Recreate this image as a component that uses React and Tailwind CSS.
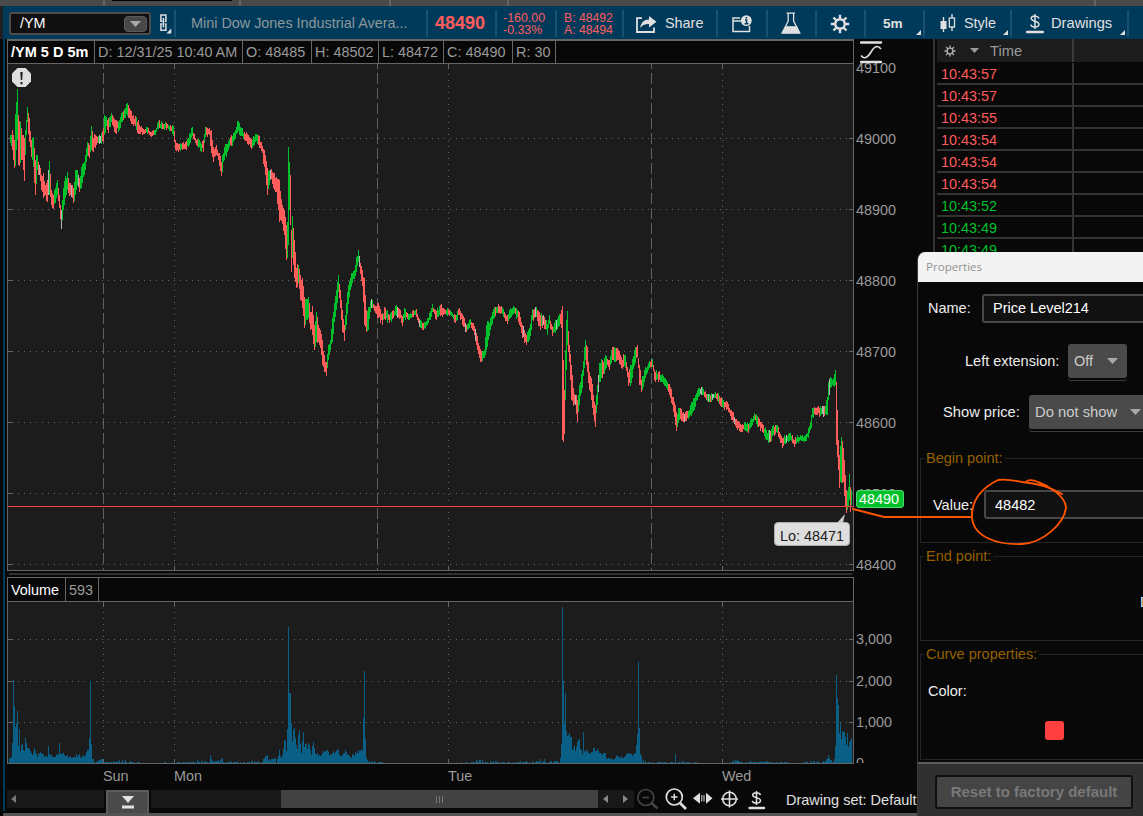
import clsx from "clsx";

const UP = "#00c02c";
const DOWN = "#ff5c5c";
const FLAT = "#b4b4b4";

// x, high, low of the 5 minute bars, interpolated in between
const priceKnots = [
  [10, 135, 143], [12, 130, 150], [14, 140, 168], [15, 114, 166], [16, 102, 150],
  [17, 89, 140], [18, 115, 165], [20, 122, 163], [22, 135, 160], [24, 138, 181],
  [25, 130, 155], [27, 107, 122], [29, 118, 142], [31, 140, 157], [33, 137, 167],
  [35, 160, 195], [37, 155, 170], [39, 165, 175], [41, 175, 190], [43, 173, 198],
  [45, 185, 195], [47, 180, 202], [49, 161, 195], [51, 190, 205], [53, 195, 209],
  [55, 188, 203], [57, 180, 195], [59, 195, 208], [61, 210, 229], [63, 188, 210],
  [65, 176, 198], [67, 172, 190], [69, 183, 196], [71, 185, 197], [73, 188, 203],
  [75, 170, 195], [77, 170, 185], [79, 178, 192], [81, 167, 188], [83, 163, 177],
  [85, 155, 170], [87, 142, 156], [89, 145, 158], [91, 126, 150], [93, 138, 152],
  [95, 135, 148], [97, 137, 143], [99, 135, 144], [101, 133, 144], [103, 128, 142],
  [104, 115, 135], [106, 117, 126], [108, 118, 133], [111, 113, 122], [115, 120, 133],
  [119, 120, 130], [122, 112, 122], [125, 108, 118], [127, 103, 116], [130, 110, 121],
  [133, 115, 126], [136, 117, 130], [139, 125, 134], [143, 129, 134], [147, 127, 134],
  [151, 132, 137], [155, 130, 135], [158, 121, 129], [162, 123, 129], [166, 123, 130],
  [170, 125, 131], [173, 126, 136], [175, 140, 150], [178, 144, 152], [182, 143, 150],
  [186, 141, 150], [189, 133, 145], [192, 127, 136], [195, 138, 143], [200, 142, 151],
  [203, 140, 152], [205, 127, 137], [209, 128, 135], [211, 130, 153], [213, 147, 162],
  [216, 145, 155], [219, 153, 166], [221, 162, 176], [224, 147, 160], [228, 141, 150],
  [231, 135, 146], [234, 132, 140], [237, 121, 133], [240, 127, 136], [244, 132, 140],
  [248, 135, 145], [251, 139, 149], [255, 134, 142], [258, 135, 145], [261, 142, 151],
  [264, 150, 167], [267, 168, 195], [270, 170, 180], [273, 173, 188], [276, 177, 192],
  [279, 180, 222], [282, 205, 224], [284, 210, 235], [286, 225, 260], [287, 222, 258],
  [288, 147, 245], [289, 162, 210], [290, 175, 225], [291, 230, 272], [292, 216, 258],
  [294, 240, 278], [296, 268, 288], [298, 265, 283], [300, 275, 300], [302, 278, 308],
  [304, 297, 328], [306, 299, 320], [308, 297, 318], [310, 312, 330], [312, 306, 335],
  [314, 325, 350], [316, 312, 342], [318, 325, 342], [320, 330, 348], [322, 340, 365],
  [324, 355, 372], [326, 362, 376], [328, 345, 360], [330, 340, 350], [332, 318, 342],
  [334, 303, 322], [336, 290, 310], [338, 275, 292], [340, 290, 308], [342, 310, 332],
  [344, 325, 341], [346, 303, 325], [348, 285, 304], [350, 278, 290], [352, 273, 283],
  [354, 270, 279], [356, 257, 272], [358, 250, 262], [360, 263, 274], [362, 270, 286],
  [364, 278, 325], [366, 310, 332], [368, 307, 330], [370, 301, 312], [372, 300, 308],
  [375, 306, 313], [378, 303, 318], [382, 313, 325], [385, 308, 320], [389, 315, 323],
  [393, 310, 318], [396, 305, 316], [400, 310, 318], [402, 316, 326], [404, 308, 318],
  [408, 314, 320], [412, 311, 317], [416, 309, 317], [419, 319, 327], [423, 323, 330],
  [427, 318, 325], [430, 311, 320], [432, 304, 312], [436, 311, 320], [440, 305, 316],
  [443, 308, 315], [450, 310, 315], [455, 315, 323], [459, 308, 315], [463, 316, 327],
  [466, 325, 332], [470, 319, 325], [474, 326, 335], [477, 336, 350], [480, 349, 362],
  [484, 350, 358], [486, 325, 350], [490, 318, 330], [494, 307, 318], [498, 304, 313],
  [503, 309, 317], [507, 315, 324], [510, 308, 318], [514, 307, 313], [518, 311, 322],
  [522, 325, 338], [526, 335, 345], [530, 324, 336], [532, 309, 320], [536, 307, 317],
  [540, 315, 330], [543, 315, 325], [547, 324, 335], [549, 315, 324], [552, 326, 336],
  [556, 320, 330], [560, 314, 324], [561, 310, 328], [562, 306, 440], [563, 360, 442],
  [564, 390, 434], [565, 350, 400], [566, 320, 370], [567, 311, 345], [569, 345, 362],
  [571, 365, 400], [573, 388, 406], [575, 395, 405], [577, 400, 422], [579, 385, 405],
  [582, 370, 388], [584, 347, 368], [585, 340, 360], [587, 347, 372], [589, 372, 390],
  [591, 378, 400], [593, 395, 415], [595, 405, 427], [597, 385, 405], [599, 363, 382],
  [602, 360, 378], [606, 356, 368], [609, 360, 370], [611, 350, 363], [614, 347, 362],
  [618, 350, 360], [621, 357, 368], [625, 355, 368], [628, 372, 386], [631, 365, 383],
  [634, 350, 366], [637, 345, 357], [639, 365, 385], [641, 380, 392], [644, 370, 382],
  [648, 363, 370], [652, 359, 367], [654, 370, 380], [658, 372, 382], [662, 374, 382],
  [666, 380, 388], [670, 387, 398], [673, 397, 412], [676, 412, 431], [679, 408, 420],
  [683, 412, 422], [688, 411, 419], [692, 402, 413], [697, 390, 400], [702, 387, 395],
  [706, 394, 400], [710, 395, 402], [715, 392, 398], [718, 393, 402], [723, 400, 408],
  [728, 404, 412], [732, 412, 420], [736, 419, 428], [740, 424, 432], [744, 423, 430],
  [748, 424, 433], [750, 420, 428], [754, 413, 420], [758, 417, 427], [762, 424, 432],
  [766, 430, 440], [770, 431, 442], [773, 425, 435], [777, 425, 433], [780, 434, 443],
  [782, 438, 448], [786, 435, 443], [790, 433, 440], [794, 440, 447], [797, 435, 442],
  [801, 436, 441], [806, 434, 441], [808, 428, 438], [811, 415, 428], [812, 408, 417],
  [816, 408, 415], [820, 406, 416], [824, 406, 416], [827, 397, 415], [828, 382, 400],
  [830, 377, 388], [833, 378, 386], [835, 370, 385], [836, 382, 445], [838, 440, 470],
  [839, 455, 488], [841, 437, 483], [843, 448, 482], [845, 475, 507], [846, 490, 513],
  [848, 487, 506], [849, 474, 500], [850, 487, 512], [851, 490, 505],
];

// x, bar height
const volumeKnots = [
  [9, 5], [11, 6], [12, 20], [13, 83], [14, 57], [15, 36], [16, 40], [17, 52],
  [18, 17], [19, 34], [20, 12], [22, 19], [24, 12], [25, 25], [27, 15], [30, 12],
  [32, 8], [34, 15], [37, 6], [40, 11], [44, 6], [47, 6], [48, 17], [49, 9],
  [54, 6], [58, 8], [59, 20], [60, 9], [66, 7], [72, 5], [79, 9], [81, 5],
  [85, 8], [88, 13], [89, 25], [90, 82], [91, 19], [92, 4], [96, 1], [102, 4],
  [105, 1], [120, 2], [127, 3], [132, 1], [150, 0], [180, 1], [190, 1], [200, 3],
  [205, 1], [209, 1], [210, 8], [211, 4], [213, 2], [220, 3], [222, 5], [224, 2],
  [245, 1], [255, 2], [262, 2], [267, 8], [268, 3], [277, 4], [279, 13], [281, 5],
  [285, 22], [286, 12], [287, 34], [288, 136], [289, 70], [290, 70], [291, 40],
  [292, 22], [293, 33], [295, 25], [297, 14], [299, 33], [301, 10], [303, 31],
  [304, 16], [307, 14], [309, 18], [311, 8], [313, 21], [315, 9], [320, 7],
  [325, 12], [330, 8], [337, 14], [340, 7], [346, 11], [350, 6], [356, 9],
  [361, 14], [362, 12], [363, 45], [364, 92], [365, 24], [366, 5], [370, 2],
  [380, 1], [390, 0], [430, 0], [455, 0], [470, 1], [477, 3], [483, 2], [495, 2],
  [512, 1], [525, 2], [535, 2], [544, 4], [548, 1], [558, 3], [560, 5], [561, 19],
  [562, 156], [563, 82], [564, 39], [565, 70], [566, 32], [568, 28], [570, 26],
  [571, 26], [572, 13], [576, 16], [579, 24], [580, 14], [582, 9], [583, 31],
  [584, 12], [586, 14], [590, 9], [594, 15], [600, 10], [604, 10], [607, 4],
  [614, 4], [616, 7], [622, 5], [628, 9], [632, 7], [635, 10], [636, 18],
  [637, 29], [638, 101], [639, 35], [640, 9], [642, 2], [650, 1], [674, 1],
  [675, 9], [676, 2], [695, 1], [700, 0], [728, 0], [733, 2], [738, 2], [745, 1],
  [770, 2], [780, 1], [800, 0], [806, 2], [812, 2], [820, 1], [827, 4], [828, 8],
  [830, 3], [834, 4], [835, 17], [836, 88], [837, 65], [838, 58], [839, 30],
  [840, 40], [841, 24], [842, 32], [844, 31], [845, 26], [846, 18], [847, 30],
  [848, 16], [850, 23], [851, 25],
];

// repeatable noise in 0..1
const noise = (n) => {
  const v = Math.sin(n * 127.1) * 43758.5453;
  return v - Math.floor(v);
};

const interpolate = (knots, x, col) => {
  const i = knots.findIndex((k) => k[0] >= x);
  if (knots[i][0] === x) return knots[i][col];
  const a = knots[i - 1];
  const b = knots[i];
  return a[col] + ((b[col] - a[col]) * (x - a[0])) / (b[0] - a[0]);
};

const priceBars = [];
let lastMid = 139;
for (let x = 10; x <= 851; x++) {
  const exact = priceKnots.some((k) => k[0] === x);
  const hi = interpolate(priceKnots, x, 1);
  const lo = interpolate(priceKnots, x, 2);
  const spread = lo - hi;
  // pull some edges in and let others stick out, so the outline stays ragged
  const jag = exact ? 0 : Math.min(spread * 0.5, 6);
  const top = Math.round(hi + jag * (noise(x) - 0.4));
  const bottom = Math.round(lo - jag * (noise(x + 900) - 0.4));
  const mid = (hi + lo) / 2;
  const swing = (noise(Math.floor(x / 2) + 50) - 0.5) * 5;
  let color = lastMid - mid + swing > 0 ? UP : DOWN;
  if (noise(x + 333) > 0.96) color = FLAT;
  priceBars.push({ x, y: top, h: Math.max(4, bottom - top), color });
  lastMid = mid;
}

const volumeBars = [];
for (let x = 9; x <= 851; x++) {
  const exact = volumeKnots.some((k) => k[0] === x);
  let h = interpolate(volumeKnots, x, 1);
  if (!exact) h = h * (0.8 + 0.5 * noise(x + 17));
  if (h < 4) h = noise(x + 71) * h * 1.2;
  h = Math.round(h);
  if (h > 0) volumeBars.push({ x, h });
}

const FONT = "font-['Liberation_Sans',Arial,sans-serif]";

const Corner = () => (
  <svg className="absolute right-[2px] bottom-[2px]" width="5" height="5">
    <path d="M5 0V5H0Z" fill="#e0e0e0" />
  </svg>
);

const DollarIcon = ({ className }) => (
  <svg className={className} width="18" height="20" viewBox="0 0 18 20" fill="none" stroke="#e0e0e0">
    <path d="M9 0V15M13 4.5C12 1.5 5.5 1.2 5.2 4.4C5 8 13 6.3 13 10.3C12.8 14 5.5 13.8 4.8 10.6" strokeWidth="1.5" />
    <path d="M1 18H17" strokeWidth="2.4" strokeLinecap="round" />
  </svg>
);

const GearIcon = ({ size, color }) => (
  <svg width={size} height={size} viewBox="0 0 20 20" fill="none" stroke={color}>
    <circle cx="10" cy="10" r="4.8" strokeWidth="2.4" />
    <path
      d="M10 .8V5M10 15V19.2M.8 10H5M15 10H19.2M3.5 3.5L6.5 6.5M13.5 13.5L16.5 16.5M16.5 3.5L13.5 6.5M6.5 13.5L3.5 16.5"
      strokeWidth="2.4"
    />
  </svg>
);

const ToolCell = ({ className, children }) => (
  <div className={clsx("relative flex h-[27px] shrink-0 items-center border-l-2 border-[#1b5070]", className)}>
    {children}
  </div>
);

const TopStrip = () => (
  <div className="flex h-[6px] shrink-0 bg-[#4a4a4a]">
    <div className="w-[105px] border-r-2 border-[#636363]" />
    <div className="w-[136px] border-r-2 border-[#636363] pl-[7px]">
      <div className="h-px w-[120px] bg-black" />
    </div>
    <div className="w-[150px] border-r-2 border-[#636363]" />
    <div className="w-[118px] border-r-2 border-[#636363]" />
    <div className="w-[587px] border-r-2 border-[#636363]" />
  </div>
);

const Toolbar = () => (
  <div className="flex h-[33px] shrink-0 border-l-[3px] border-[#202020] bg-[#003a5a] pt-1 text-[14.4px] text-[#e0e0e0]">
    <div className="flex w-[171px] shrink-0 pt-[2px] pl-[6px]">
      <div className="flex h-[23px] w-[142px] shrink-0 items-center justify-between rounded-[3px] border-2 border-[#4c4c4c] bg-[#101010] pr-[2px] pl-[9px] text-white">
        <span>/YM</span>
        <div className="flex h-4 w-[23px] items-center justify-center rounded-sm border border-[#5a5a5a] bg-[#484848]">
          <svg width="11" height="6">
            <path d="M0 0H11L5.5 6Z" fill="#a8a8a8" />
          </svg>
        </div>
      </div>
      <svg className="mt-[2px] ml-2 shrink-0" width="13" height="21" viewBox="0 0 13 21" fill="none" stroke="#dedede">
        <path d="M3.4 7.3H1.9V1H6.9V7.3H5.8M3.4 10H1.9V16.2H6.9V10H5.8" strokeWidth="1.5" />
        <path d="M4.4 4V13.3" strokeWidth="1.5" />
        <path d="M12.3 14.5V19.5H7.3Z" fill="#e0e0e0" stroke="none" />
      </svg>
    </div>
    <ToolCell className="w-[252px] pl-[15px] text-[#8e979c]">Mini Dow Jones Industrial Avera...</ToolCell>
    <ToolCell className="w-[69px] pl-[7px] text-[18px] font-bold text-[#ff5c5c]">48490</ToolCell>
    <ToolCell className="w-[60px] pl-[6px] text-[12.4px] leading-3 text-[#ff5c5c]">
      <div>
        -160.00
        <br />
        -0.33%
      </div>
    </ToolCell>
    <ToolCell className="w-[67px] pl-[7px] text-[12.2px] leading-3 text-[#ff5c5c]">
      <div>
        B: 48492
        <br />
        A: 48494
      </div>
    </ToolCell>
    <ToolCell className="w-[94px] gap-2 pl-3">
      <svg width="21" height="18" viewBox="0 0 21 18">
        <path d="M6 3.2H1V17H18V12.5" fill="none" stroke="#e0e0e0" strokeWidth="1.8" />
        <path d="M13 1V4.5C8 4.8 5.3 7 4 13C7 9.7 9 9 13 9V12.5L20.5 6.7Z" fill="#e0e0e0" />
      </svg>
      Share
    </ToolCell>
    <ToolCell className="w-[50px] pl-[13px]">
      <svg width="22" height="18" viewBox="0 0 22 18">
        <path d="M9 3H2V16.5H18.5V11M2 6H10" fill="none" stroke="#e0e0e0" strokeWidth="1.5" />
        <circle cx="15.3" cy="5.6" r="5.4" fill="#e0e0e0" />
        <path d="M14 5H15.6V8.5M13.6 8.7H17.4M14.6 2.7H16.2" fill="none" stroke="#003a5a" strokeWidth="1.4" />
      </svg>
    </ToolCell>
    <ToolCell className="w-[49px] pl-[13px]">
      <svg width="20" height="23" viewBox="0 0 20 23" fill="none" stroke="#e0e0e0" strokeWidth="1.3">
        <path d="M5.5 1.2H14M7.2 1.5V9L1.5 20.5H18.5L12.6 9V1.5" />
        <path d="M4.6 14.8H15.5L18.7 21H1.2Z" fill="#e0e0e0" />
      </svg>
    </ToolCell>
    <ToolCell className="w-[49px] pl-[13px]">
      <GearIcon size={20} color="#e0e0e0" />
    </ToolCell>
    <ToolCell className="w-[59px] pl-[17px] text-[13.6px] font-bold">
      5m
      <Corner />
    </ToolCell>
    <ToolCell className="w-[87px] gap-[8px] pl-[15px]">
      <svg width="16" height="20" viewBox="0 0 16 20">
        <path d="M3.5 3V18M12 0V4M12 12.5V17" stroke="#e0e0e0" strokeWidth="1.4" />
        <rect x="0.5" y="7" width="6" height="8" fill="#e0e0e0" />
        <rect x="9.3" y="4" width="5.2" height="9" fill="none" stroke="#e0e0e0" strokeWidth="1.3" />
      </svg>
      Style
      <Corner />
    </ToolCell>
    <ToolCell className="w-[117px] pl-[14px] text-[14.7px]">
      <DollarIcon className="mr-[7px]" />
      Drawings
      <Corner />
    </ToolCell>
    <ToolCell className="w-5" />
  </div>
);

const ohlc = [
  { text: "/YM 5 D 5m", style: "w-[87px] text-white font-bold text-[14.5px] pl-[3px]" },
  { text: "D: 12/31/25 10:40 AM", style: "w-[148px] pl-[3px]" },
  { text: "O: 48485", style: "w-[69px] pl-[3px]" },
  { text: "H: 48502", style: "w-[67px] pl-[3px]" },
  { text: "L: 48472", style: "w-[65px] pl-[3px]" },
  { text: "C: 48490", style: "w-[69px] pl-[3px]" },
  { text: "R: 30", style: "w-[43px] pl-[3px]" },
];

const InfoRow = () => (
  <div className="flex h-6 shrink-0 border border-t-[#666] border-[#666] bg-[#080808] text-[14.4px] leading-[22px] text-[#999]">
    {ohlc.map((cell) => (
      <div key={cell.text} className={clsx("shrink-0 border-r border-[#666] whitespace-nowrap", cell.style)}>
        {cell.text}
      </div>
    ))}
  </div>
);

const dots = { stroke: "#666", strokeWidth: 1, strokeDasharray: "1 5" };

const PriceChart = () => (
  <svg className="block shrink-0" width="847" height="507" viewBox="7 64 847 507" shapeRendering="crispEdges">
    <rect x="7" y="64" width="847" height="507" fill="#1c1c1c" />
    {[138.5, 209.5, 280.5, 351.5, 422.5, 493.5, 564.5].map((y) => (
      <g key={y}>
        <line x1="18" x2="848" y1={y} y2={y} {...dots} />
        <path d={`M8 ${y}H13M849 ${y}H854`} stroke="#666" />
      </g>
    ))}
    {[174.5, 448.5, 722.5].map((x) => (
      <g key={x}>
        <line x1={x} x2={x} y1="74" y2="562" {...dots} />
        <path d={`M${x} 64V69M${x} 566V571`} stroke="#666" />
      </g>
    ))}
    {[103.5, 377.5, 651.5].map((x) => (
      <line key={x} x1={x} x2={x} y1="64" y2="571" stroke="#606060" strokeDasharray="11 4" strokeDashoffset="6" />
    ))}
    {priceBars.map((bar) => (
      <rect key={bar.x} x={bar.x} y={bar.y} width="1" height={bar.h} fill={bar.color} />
    ))}
    <rect x="8" y="506" width="846" height="1" fill="#ff4040" />
    <path d="M7.5 64V570.5H853.5V64" fill="none" stroke="#666" />
    <g shapeRendering="auto">
      <path d="M17.5 68H25.5L31 73.5V81.5L25.5 87H17.5L12 81.5V73.5Z" fill="#dedede" />
      <path d="M20.3 72H22.7L22.2 80H20.8ZM20.5 82H22.5V84.3H20.5Z" fill="#202020" />
    </g>
  </svg>
);

const VolumeChart = () => (
  <div className="w-[847px] shrink-0">
    <div className="flex h-[25px] border border-[#666] bg-[#080808] text-[14.4px] leading-6">
      <div className="w-[58px] border-r border-[#666] pl-[3px] text-white">Volume</div>
      <div className="w-[33px] border-r border-[#666] pl-[3px] text-[#999]">593</div>
    </div>
    <svg className="block" width="847" height="162" viewBox="7 602 847 162" shapeRendering="crispEdges">
      <rect x="7" y="602" width="847" height="162" fill="#1c1c1c" />
      {[639.5, 681.5, 722.5].map((y) => (
        <g key={y}>
          <line x1="18" x2="848" y1={y} y2={y} {...dots} />
          <path d={`M8 ${y}H13M849 ${y}H854`} stroke="#666" />
        </g>
      ))}
      {[103.5, 174.5, 448.5, 722.5].map((x) => (
        <g key={x}>
          <line x1={x} x2={x} y1="612" y2="756" {...dots} />
          <path d={`M${x} 602V607M${x} 759V763`} stroke="#666" />
        </g>
      ))}
      {volumeBars.map((bar) => (
        <rect key={bar.x} x={bar.x} y={763 - bar.h} width="1" height={bar.h} fill="#0a5f87" />
      ))}
      <path d="M7.5 602V763.5H853.5V602" fill="none" stroke="#666" />
    </svg>
  </div>
);

const AxisColumn = () => (
  <div className="relative w-[79px] shrink-0 pt-[20.5px] pl-[2px] text-[14.4px] text-[#999]">
    <svg className="absolute top-[2px] left-[6px] z-10" width="23" height="24" fill="none" stroke="#e0e0e0">
      <path d="M1 1.5H21M1 21H21" strokeWidth="2.4" strokeLinecap="round" />
      <path d="M1 14.5C4 18.5 7.5 17 11 11C14 5.5 17.5 3.5 21 8" strokeWidth="1.6" />
    </svg>
    {["49100", "49000", "48900", "48800", "48700", "48600", "48500", "48400"].map((label) => (
      <div key={label} className="h-[71px] leading-4">
        {label}
      </div>
    ))}
    <div className="mt-[3.5px] h-[42px] leading-4">3,000</div>
    <div className="h-[41px] leading-4">2,000</div>
    <div className="h-[41px] leading-4">1,000</div>
    <div className="h-[8px] overflow-hidden leading-4">0</div>
    {/* current price and daily low markers */}
    <div className="absolute top-[451px] left-[2px] h-[18px] w-[48px] rounded-[3px] border border-[#4fd970] bg-[#00c02c] pl-[2px] leading-4 text-white">
      48490
    </div>
    <div className="absolute top-[483px] left-[-80px] h-[24px] w-[76px] rounded-[4px] border border-[#aaa] bg-[#dedede] text-center leading-[26px] whitespace-nowrap text-[#202020]">
      Lo: 48471
      <svg className="absolute top-[-9px] right-[3px]" width="9" height="10">
        <path d="M8 0L6 9H0Z" fill="#c8c8c8" />
      </svg>
    </div>
  </div>
);

const BottomBar = () => (
  <div className="flex h-6 w-[926px] shrink-0">
    <div className="flex h-[18px] w-[97px] shrink-0 items-center bg-[#181818] pl-1">
      <svg width="5" height="8">
        <path d="M5 0V8L0 4Z" fill="#777" />
      </svg>
    </div>
    <div className="ml-[2px] flex h-6 w-[43px] shrink-0 justify-center border-2 border-b-0 border-[#5c5c5c] bg-[#4a4a4a] pt-1">
      <svg width="12" height="13">
        <path d="M0 0H12L6 7Z" fill="#e0e0e0" />
        <rect y="9.5" width="12" height="3" fill="#e0e0e0" />
      </svg>
    </div>
    <div className="ml-[2px] h-[18px] w-[130px] shrink-0 bg-[#181818]" />
    <div className="flex h-[18px] w-[317px] shrink-0 items-center justify-center bg-[#424242]">
      <svg width="7" height="7" stroke="#777">
        <path d="M.5 0V7M3.5 0V7M6.5 0V7" />
      </svg>
    </div>
    <div className="flex h-[18px] w-[36px] shrink-0 items-center justify-between bg-[#181818] pr-[6px] pl-[5px]">
      <svg width="5" height="8">
        <path d="M5 0V8L0 4Z" fill="#888" />
      </svg>
      <svg width="5" height="8">
        <path d="M0 0V8L5 4Z" fill="#888" />
      </svg>
    </div>
    <svg className="mt-[-3px] shrink-0" width="140" height="24" viewBox="634 787 140 24" fill="none" stroke="#e0e0e0">
      <g stroke="#454545">
        <circle cx="645.8" cy="797.5" r="8" strokeWidth="1.6" />
        <path d="M642.5 797.5H649" strokeWidth="1.6" />
        <path d="M651.5 803L657.5 808.5" strokeWidth="2.4" />
      </g>
      <circle cx="674.3" cy="797" r="8" strokeWidth="1.7" />
      <path d="M671 797H677.6M674.3 793.7V800.3" strokeWidth="1.5" />
      <path d="M680 803L686 809" strokeWidth="2.6" />
      <path d="M693 798.3L700 792.8V803.8ZM712.5 798.3L706 792.8V803.8Z" fill="#e0e0e0" stroke="none" />
      <path d="M701.8 795V801.5M704 795V801.5" />
      <circle cx="729.5" cy="799" r="6.8" strokeWidth="1.6" />
      <path d="M721 799H738M729.5 790.5V807.5" strokeWidth="1.6" />
      <path d="M756.5 791V805M760.5 795C759.5 792.2 753 792 752.7 795C752.5 798.4 760.5 796.8 760.5 800.5C760.3 804 753 803.8 752.3 800.8" strokeWidth="1.5" />
      <path d="M749.5 808H764" strokeWidth="2.4" strokeLinecap="round" />
    </svg>
    <div className="shrink-0 pt-[2px] pl-3 text-[14.5px] whitespace-nowrap text-[#e0e0e0]">Drawing set: Default</div>
  </div>
);

const trades = [
  ["10:43:57", "down"],
  ["10:43:57", "down"],
  ["10:43:55", "down"],
  ["10:43:54", "down"],
  ["10:43:54", "down"],
  ["10:43:54", "down"],
  ["10:43:52", "up"],
  ["10:43:49", "up"],
  ["10:43:49", "up"],
];

const TimeSales = () => (
  <div className="grow border-l-2 border-[#333] pl-[2px] text-[14.4px]">
    <div className="flex h-[23px] items-center bg-[#1c1c1c] text-[#999]">
      <div className="flex h-full w-[137px] items-center border-r-2 border-[#3a3a3a] pl-[7px]">
        <GearIcon size={12} color="#aaa" />
        <svg className="mr-[11px] ml-[14px]" width="9" height="5">
          <path d="M0 0H9L4.5 5Z" fill="#999" />
        </svg>
        <span className="pt-px text-[14.7px]">Time</span>
      </div>
    </div>
    <div className="pt-px">
      {trades.map(([time, side], i) => (
        <div key={i} className="flex h-[22px] border-b-2 border-[#333] leading-[22px]">
          <div
            className={clsx(
              "w-[137px] border-r-2 border-[#333] pl-1",
              side === "up" ? "text-[#00c02c]" : "text-[#ff5c5c]"
            )}
          >
            {time}
          </div>
        </div>
      ))}
    </div>
  </div>
);

const DropButton = ({ label, className }) => (
  <div
    className={clsx(
      "flex h-[34px] shrink-0 items-center justify-between rounded-[3px] bg-[#4a4a4a] pl-[6px] text-[#ccc] shadow-[0_2px_0_#080808,0_3px_0_#3c3c3c]",
      className
    )}
  >
    {label}
    <svg width="11" height="6">
      <path d="M0 0H11L5.5 6Z" fill="#a8a8a8" />
    </svg>
  </div>
);

const Group = ({ title, className, children }) => (
  <fieldset className={clsx("ml-[2px] w-[260px] border border-[#242424]", className)}>
    <legend className="ml-[3px] px-[2px] leading-4 text-[#946000]">{title}</legend>
    {children}
  </fieldset>
);

const PropertiesDialog = () => (
  <div className="absolute top-[252px] left-[917px] h-[564px] w-[240px] overflow-hidden rounded-tl-[8px] border-l border-[#3c3c3c] bg-[#080808] text-[14.5px] whitespace-nowrap text-[#eee]">
    <div className="h-[30px] bg-[#f3f3f3] pl-2 font-['Open_Sans','Noto_Sans',sans-serif] text-[11.6px] leading-[30px] text-[#929292]">
      Properties
    </div>
    <div className="mt-3 flex h-[29px] items-center pl-[10px]">
      <span className="w-[54px] shrink-0">Name:</span>
      <div className="h-[29px] w-[200px] shrink-0 rounded-[3px] border-2 border-[#484848] bg-[#111] pl-[9px] leading-[25px] text-white">
        Price Level214
      </div>
    </div>
    <div className="mt-[21px] flex items-center pl-[47px]">
      <span className="w-[103px] shrink-0">Left extension:</span>
      <DropButton label="Off" className="w-[59px] pr-[9px]" />
    </div>
    <div className="mt-[17px] flex items-center pl-[25px]">
      <span className="w-[86px] shrink-0 text-[14.7px]">Show price:</span>
      <DropButton label="Do not show" className="w-[120px] pr-[8px] text-[14.8px]" />
    </div>
    <Group title="Begin point:" className="mt-[21px] h-[93px]">
      <div className="mt-[24px] flex h-[29px] items-center pl-[12px]">
        <span className="w-[51px] shrink-0 pt-px">Value:</span>
        <div className="h-[29px] w-[200px] shrink-0 rounded-[3px] border-2 border-[#484848] bg-[#111] pl-[9px] leading-[26px] text-white">
          48482
        </div>
      </div>
    </Group>
    <Group title="End point:" className="mt-[5px] h-[93px]">
      <div className="mt-[30px] ml-[219px]">D</div>
    </Group>
    <Group title="Curve properties:" className="mt-[5px] h-[114px]">
      <div className="mt-[21px] pl-[7px]">Color:</div>
      <div className="mt-[21px] ml-[124px] h-[19px] w-[19px] rounded-[3px] bg-[#ff4040]" />
    </Group>
    <div className="mt-[2px] h-[60px] border-t-2 border-[#5c5c5c] bg-[#303030] pt-[11px] pl-[17px]">
      <div className="h-[34px] w-[198px] rounded-[3px] border-2 border-[#101010] bg-[#444] text-center text-[15px] leading-[30px] font-bold text-[#787878]">
        Reset to factory default
      </div>
    </div>
  </div>
);

const Annotation = () => (
  <svg className="absolute top-[470px] left-[850px]" width="230" height="85" viewBox="850 470 230 85" fill="none" stroke="#ff5500" strokeWidth="1.9" strokeLinecap="round">
    <path d="M853 509L884 517H972" />
    <path d="M1062 494C1050 487 1035 483 1022 482C1012 480 1004 479 998 480C982 488 971 500 972 518C974 537 997 545 1022 544C1043 543 1065 523 1066 507C1065 496 1049 486 1038 482C1032 479 1027 480 1026 482" />
  </svg>
);

const TimeAxis = () => (
  <div className="flex h-[26px] shrink-0 pl-[96px] text-[14.4px] leading-[24px] text-[#999]">
    <div className="w-[71px]">Sun</div>
    <div className="w-[274px]">Mon</div>
    <div className="w-[274px]">Tue</div>
    <div>Wed</div>
  </div>
);

const App = () => (
  <div
    className={clsx(
      "relative flex h-[816px] w-[1143px] flex-col overflow-hidden bg-[#080808] leading-[17px]",
      FONT
    )}
  >
    <TopStrip />
    <Toolbar />
    <div className="flex h-[774px] shrink-0">
      <div className="h-[772px] w-[7px] shrink-0 pl-[3px]">
        <div className="h-full w-[2px] bg-[#003a5a]" />
      </div>
      <div className="flex w-[926px] shrink-0 flex-col">
        <div className="flex h-[725px] shrink-0">
          <div className="flex w-[847px] shrink-0 flex-col">
            <div className="h-px shrink-0 bg-[#666]" />
            <InfoRow />
            <PriceChart />
            <div className="my-[2px] ml-[2px] h-[2px] w-[843px] shrink-0 bg-[#303030]" />
            <VolumeChart />
          </div>
          <AxisColumn />
        </div>
        <TimeAxis />
        <BottomBar />
      </div>
      <TimeSales />
    </div>
    <div className="ml-[3px] h-[3px] shrink-0 bg-[#555]" />
    <PropertiesDialog />
    <Annotation />
  </div>
);

export default App;
